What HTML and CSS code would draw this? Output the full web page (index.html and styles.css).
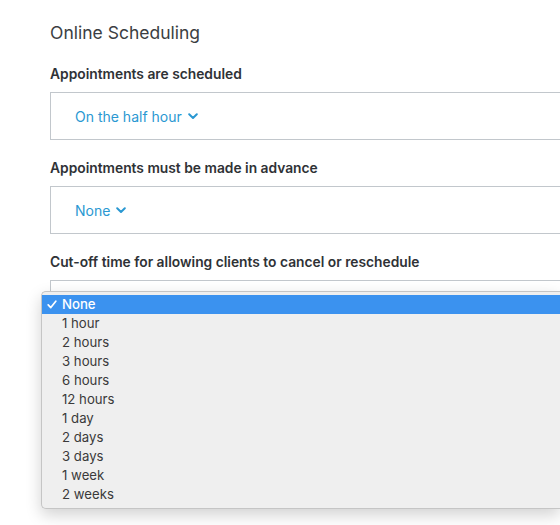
FILE: index.html
```html
<!DOCTYPE html>
<html>
<head>
<meta charset="utf-8">
<link rel="stylesheet" href="styles.css">
</head>
<body>
<div class="page">
  <h2 class="title">Online Scheduling</h2>
  <div class="field">
    <div class="label">Appointments are scheduled</div>
    <div class="box"><span class="value">On the half hour</span><svg class="chev" width="10" height="7" viewBox="0 0 10 7"><path d="M1.2 1.3 L5 5 L8.8 1.3" fill="none" stroke="currentColor" stroke-width="2" stroke-linecap="round" stroke-linejoin="round"/></svg></div>
  </div>
  <div class="field">
    <div class="label">Appointments must be made in advance</div>
    <div class="box"><span class="value">None</span><svg class="chev" width="10" height="7" viewBox="0 0 10 7"><path d="M1.2 1.3 L5 5 L8.8 1.3" fill="none" stroke="currentColor" stroke-width="2" stroke-linecap="round" stroke-linejoin="round"/></svg></div>
  </div>
  <div class="field">
    <div class="label">Cut-off time for allowing clients to cancel or reschedule</div>
    <div class="box"></div>
  </div>
  <ul class="menu">
    <li class="item selected"><svg class="check" width="10" height="9" viewBox="0 0 10 9"><path d="M1.2 4.8 L3.8 7.6 L8.8 1.2" fill="none" stroke="currentColor" stroke-width="1.7" stroke-linecap="round" stroke-linejoin="round"/></svg>None</li>
    <li class="item">1 hour</li>
    <li class="item">2 hours</li>
    <li class="item">3 hours</li>
    <li class="item">6 hours</li>
    <li class="item">12 hours</li>
    <li class="item">1 day</li>
    <li class="item">2 days</li>
    <li class="item">3 days</li>
    <li class="item">1 week</li>
    <li class="item">2 weeks</li>
  </ul>
</div>
</body>
</html>
```
FILE: styles.css
```css
html, body {
  margin: 0;
  padding: 0;
  background: #ffffff;
  overflow: hidden;
}
.page {
  position: relative;
  padding: 22px 0 0 50px;
  font-family: Inter, "Noto Sans", sans-serif;
  color: #3a3d40;
  height: 525px;
  box-sizing: border-box;
  overflow: hidden;
}
.title {
  margin: 0;
  font-size: 17.5px;
  font-weight: 400;
  line-height: 22px;
  color: #3b3e42;
}
.field {
  margin-top: 22px;
}
.field + .field {
  margin-top: 20px;
}
.label {
  font-size: 13.8px;
  font-weight: 600;
  line-height: 16px;
  color: #2f3236;
}
.box {
  margin-top: 10px;
  height: 48px;
  border: 1px solid #c2c7cc;
  border-right: none;
  box-sizing: border-box;
  display: flex;
  align-items: center;
  padding-left: 24px;
  color: #2a98d2;
  gap: 6px;
}
.value {
  font-size: 14px;
}
.chev {
  margin-top: 1px;
}
.menu {
  position: absolute;
  left: 41px;
  right: 0;
  top: 291px;
  margin: 0;
  padding: 3px 0 4px 0;
  list-style: none;
  background: #efefef;
  border: 1px solid #c5c5c5;
  border-right: none;
  border-radius: 5px 0 0 5px;
  box-shadow: 0 6px 16px rgba(0,0,0,0.18);
  font-family: Inter, "Noto Sans", sans-serif;
  font-size: 13.2px;
  color: #3a3a3a;
}
.item {
  height: 19px;
  line-height: 19px;
  padding-left: 20px;
  position: relative;
}
.item.selected {
  background: #3b92ef;
  color: #ffffff;
  font-weight: 500;
}
.check {
  position: absolute;
  left: 5px;
  top: 5px;
}
```
